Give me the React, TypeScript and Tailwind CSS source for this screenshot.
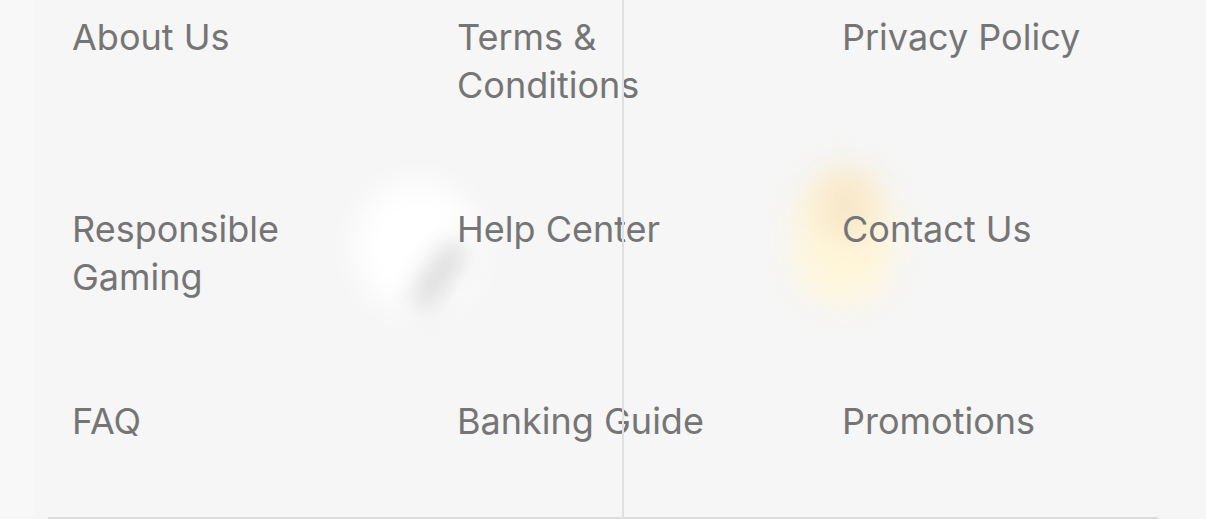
const links: string[] = [
  "About Us",
  "Terms & Conditions",
  "Privacy Policy",
  "Responsible Gaming",
  "Help Center",
  "Contact Us",
  "FAQ",
  "Banking Guide",
  "Promotions",
];

export default function App() {
  return (
    <div
      className="relative flex h-[519px] w-full flex-col overflow-hidden bg-[#f6f6f6]"
      style={{ fontFamily: "Inter, 'Noto Sans', sans-serif" }}
    >
      {/* soft decorative blobs */}
      <div className="pointer-events-none absolute left-[355px] top-[182px] h-[130px] w-[125px] rounded-full bg-white blur-lg" />
      <div className="pointer-events-none absolute left-[426px] top-[236px] h-[78px] w-[26px] rotate-[35deg] rounded-full bg-[#dadada] blur-md" />
      <div className="pointer-events-none absolute left-[796px] top-[176px] h-[128px] w-[96px] rounded-full bg-[#fff6da] blur-lg" />
      <div className="pointer-events-none absolute left-[818px] top-[170px] h-[70px] w-[55px] rounded-full bg-[#f6e6c8] blur-lg" />

      <div className="relative flex flex-1">
        {/* left gutter */}
        <div className="w-[35px] shrink-0 bg-[#f8f8f8]" />

        <div className="grid flex-1 grid-cols-[385px_385px_1fr] content-start gap-y-[96px] pl-[37px] pt-[13px]">
          {links.map((label) => (
            <a
              key={label}
              href="#"
              className="min-h-[96px] max-w-[290px] text-[36px] leading-[48px] text-[#757575]"
            >
              {label}
            </a>
          ))}
        </div>
      </div>

      {/* bottom rule */}
      <div className="mx-auto h-[2px] w-[1110px] shrink-0 bg-[#dcdcdc]" />

      {/* column divider */}
      <div className="absolute left-[622px] top-0 h-full w-[2px] bg-[#e0e0e0]" />
    </div>
  );
}
